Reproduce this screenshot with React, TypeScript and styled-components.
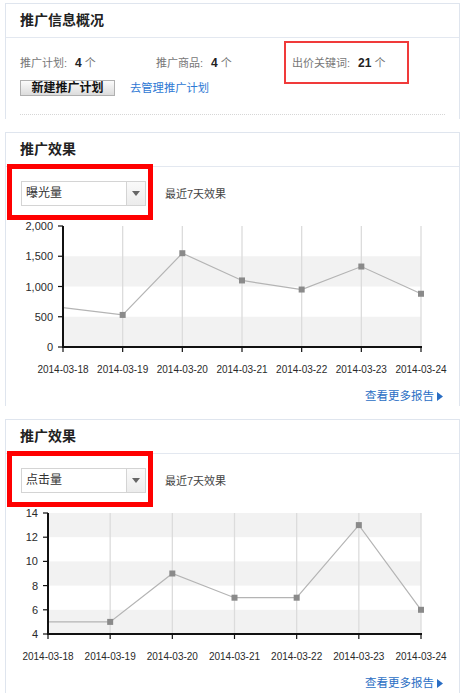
import React from "react";
import styled, { createGlobalStyle } from "styled-components";

const GlobalStyle = createGlobalStyle`
  body {
    margin: 0;
    background: #fff;
    font-family: "Liberation Sans", Arial, "Noto Sans CJK SC", sans-serif;
    color: #333;
  }
`;

const FONT = `"Liberation Sans", Arial, "Noto Sans CJK SC", sans-serif`;

type ChartProps = {
  min: number;
  max: number;
  step: number;
  data: number[];
  axisX: number;
  format?: (v: number) => string;
};

const dates = [
  "2014-03-18",
  "2014-03-19",
  "2014-03-20",
  "2014-03-21",
  "2014-03-22",
  "2014-03-23",
  "2014-03-24",
];

const LineChart = ({ min, max, step, data, axisX, format }: ChartProps) => {
  const top = 12;
  const bottom = 133;
  const right = 415;
  const fmt = format || ((v: number) => String(v));
  const yOf = (v: number) => bottom - ((v - min) / (max - min)) * (bottom - top);
  const xOf = (i: number) => axisX + (i * (right - axisX)) / (dates.length - 1);

  const ticks: number[] = [];
  for (let v = min; v <= max; v += step) ticks.push(v);

  const points = data.map((v, i) => `${xOf(i)},${yOf(v)}`).join(" ");

  return (
    <ChartSvg width={453} height={162} viewBox="0 0 453 162">
      {ticks.slice(0, -1).map((v, i) =>
        i % 2 === 0 ? (
          <rect
            key={"b" + v}
            x={axisX}
            y={yOf(v + step)}
            width={right - axisX}
            height={yOf(v) - yOf(v + step)}
            fill="#f2f2f2"
          />
        ) : null
      )}
      {dates.map((d, i) => (
        <line
          key={"g" + d}
          x1={xOf(i)}
          x2={xOf(i)}
          y1={top}
          y2={bottom}
          stroke="#dcdcdc"
          strokeWidth={1.3}
        />
      ))}
      <polyline points={points} fill="none" stroke="#b4b4b4" strokeWidth={1.2} />
      {data.map((v, i) =>
        i === 0 ? null : (
          <rect key={"m" + i} x={xOf(i) - 3} y={yOf(v) - 3} width={6} height={6} fill="#8a8a8a" />
        )
      )}
      <line x1={axisX} x2={axisX} y1={top} y2={bottom + 1} stroke="#111" strokeWidth={2} />
      <line x1={axisX - 1} x2={right + 1} y1={bottom} y2={bottom} stroke="#111" strokeWidth={2} />
      {ticks.map((v) => (
        <g key={"t" + v}>
          <line x1={axisX - 5} x2={axisX} y1={yOf(v)} y2={yOf(v)} stroke="#111" strokeWidth={1.2} />
          <text
            x={axisX - 10}
            y={yOf(v) + 4}
            textAnchor="end"
            fontSize={11}
            fontFamily={FONT}
            fill="#2a2a2a"
          >
            {fmt(v)}
          </text>
        </g>
      ))}
      {dates.map((d, i) => (
        <g key={"x" + d}>
          <line x1={xOf(i)} x2={xOf(i)} y1={bottom} y2={bottom + 5} stroke="#111" strokeWidth={1.2} />
          <text
            x={xOf(i)}
            y={bottom + 26}
            textAnchor="middle"
            fontSize={10}
            fontFamily={FONT}
            fill="#2a2a2a"
          >
            {d}
          </text>
        </g>
      ))}
    </ChartSvg>
  );
};

const withComma = (v: number) => v.toLocaleString("en-US");

type EffectProps = {
  metric: string;
  chart: ChartProps;
};

const EffectPanel = ({ metric, chart }: EffectProps) => (
  <Panel>
    <PanelHeader>推广效果</PanelHeader>
    <ControlRow>
      <SelectWrap>
        <Select>
          <SelectValue>{metric}</SelectValue>
          <SelectArrow>
            <svg width="8" height="5" viewBox="0 0 8 5">
              <path d="M0 0 L8 0 L4 5 Z" fill="#666" />
            </svg>
          </SelectArrow>
        </Select>
      </SelectWrap>
      <Hint>最近7天效果</Hint>
    </ControlRow>
    <LineChart {...chart} />
    <MoreRow>
      <MoreLink href="#">
        查看更多报告
        <svg width="6" height="9" viewBox="0 0 6 9">
          <path d="M0 0 L6 4.5 L0 9 Z" fill="#2a6ec4" />
        </svg>
      </MoreLink>
    </MoreRow>
  </Panel>
);

const App = () => {
  return (
    <Page>
      <GlobalStyle />
      <Panel>
        <PanelHeader>推广信息概况</PanelHeader>
        <InfoRow>
          <InfoItem>
            推广计划:<Value>4</Value> 个
          </InfoItem>
          <InfoItem>
            推广商品:<Value>4</Value> 个
          </InfoItem>
          <InfoItem $marked>
            出价关键词:<Value>21</Value> 个
          </InfoItem>
        </InfoRow>
        <ActionRow>
          <Button>新建推广计划</Button>
          <TextLink href="#">去管理推广计划</TextLink>
        </ActionRow>
        <Dotted />
      </Panel>
      <EffectPanel
        metric="曝光量"
        chart={{
          min: 0,
          max: 2000,
          step: 500,
          axisX: 57,
          data: [650, 530, 1550, 1100, 950, 1330, 880],
          format: withComma,
        }}
      />
      <EffectPanel
        metric="点击量"
        chart={{
          min: 4,
          max: 14,
          step: 2,
          axisX: 42,
          data: [5, 5, 9, 7, 7, 13, 6],
        }}
      />
    </Page>
  );
};

const Page = styled.div`
  width: 455px;
  padding: 3px 0 0 5px;
`;

const Panel = styled.section`
  border: 1px solid #dfe5ee;
  border-bottom: none;
  padding-bottom: 2px;
  margin-bottom: 13px;
`;

const PanelHeader = styled.h2`
  margin: 0;
  height: 33px;
  line-height: 33px;
  padding-left: 14px;
  font-size: 14px;
  font-weight: bold;
  color: #222;
  border-bottom: 1px solid #e3e8f0;
`;

const InfoRow = styled.div`
  display: grid;
  grid-template-columns: 136px 136px 136px;
  padding: 17px 0 0 14px;
`;

const InfoItem = styled.div<{ $marked?: boolean }>`
  position: relative;
  font-size: 11px;
  line-height: 16px;
  color: #777;

  &::after {
    content: "";
    display: ${(p) => (p.$marked ? "block" : "none")};
    position: absolute;
    left: -8px;
    top: -14px;
    width: 121px;
    height: 39px;
    border: 2px solid #f03a3a;
  }
`;

const Value = styled.b`
  color: #222;
  margin-left: 8px;
  font-size: 12px;
`;

const ActionRow = styled.div`
  display: flex;
  align-items: center;
  gap: 15px;
  padding: 9px 0 0 14px;
`;

const Button = styled.button`
  width: 95px;
  height: 16px;
  padding: 0;
  border: 1px solid #b0b0b0;
  background: linear-gradient(#fbfbfb, #dcdcdc);
  font-family: ${FONT};
  font-size: 12px;
  font-weight: bold;
  line-height: 14px;
  color: #111;
`;

const TextLink = styled.a`
  font-size: 11.3px;
  line-height: 16px;
  color: #2d78d4;
  text-decoration: none;
`;

const Dotted = styled.div`
  margin: 18px 14px 2px 14px;
  border-top: 1px dotted #d6d6d6;
`;

const ControlRow = styled.div`
  display: flex;
  align-items: center;
  gap: 19px;
  padding: 14px 0 0 15px;
`;

const SelectWrap = styled.div`
  position: relative;

  &::after {
    content: "";
    position: absolute;
    left: -14px;
    top: -17px;
    width: 136px;
    height: 46px;
    border: 5px solid #ff0000;
  }
`;

const Select = styled.div`
  display: flex;
  width: 123px;
  height: 23px;
  border: 1px solid #d4d4d4;
  background: #fff;
`;

const SelectValue = styled.span`
  flex: 1;
  padding-left: 4px;
  font-size: 12px;
  line-height: 23px;
  color: #333;
`;

const SelectArrow = styled.span`
  display: flex;
  align-items: center;
  justify-content: center;
  width: 18px;
  border-left: 1px solid #d4d4d4;
  background: linear-gradient(#fafafa, #ececec);
`;

const Hint = styled.span`
  font-size: 11px;
  line-height: 16px;
  color: #444;
`;

const ChartSvg = styled.svg`
  display: block;
  margin-top: 8px;
`;

const MoreRow = styled.div`
  display: flex;
  justify-content: flex-end;
  padding: 12px 16px 0 0;
`;

const MoreLink = styled.a`
  display: flex;
  align-items: center;
  gap: 3px;
  font-size: 11.5px;
  line-height: 16px;
  color: #2a6ec4;
  text-decoration: none;
`;

export default App;
